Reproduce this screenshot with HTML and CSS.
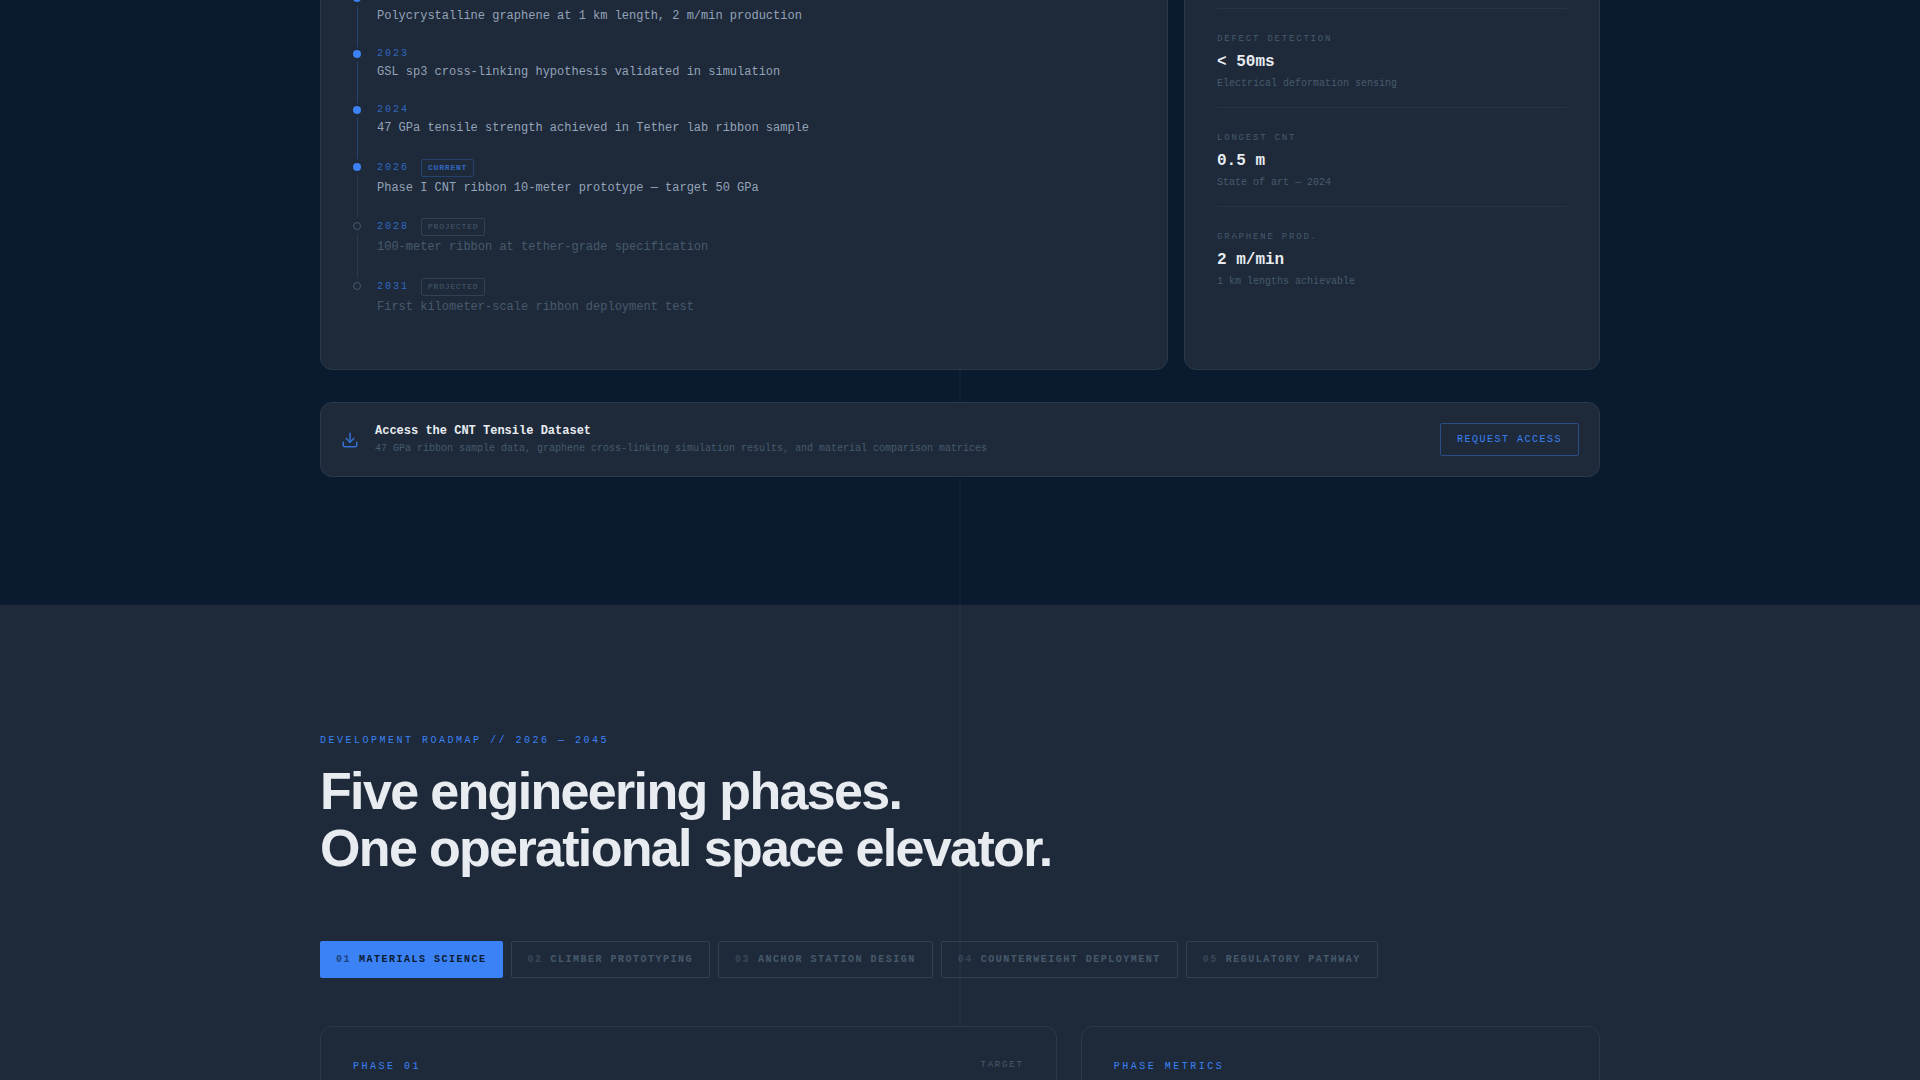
FILE: index.html
```
<!DOCTYPE html>
<html lang="en">
<head>
    <meta charset="UTF-8">
    <meta name="viewport" content="width=device-width, initial-scale=1.0">
    <title>Space Elevator Roadmap</title>
    <link rel="stylesheet" href="styles.css">
</head>
<body>
    <main class="page">
        <div class="tether-line"></div>

        <!-- Materials -->
        <section class="section materials">
            <div class="container">
                <div class="materials-grid">
                    <div class="card">
                        <ol class="timeline">
                            <li class="event">
                                <div class="marker"><span class="dot"></span><span class="line"></span></div>
                                <div class="event-body">
                                    <div class="event-head"></div>
                                    <p class="event-text">Polycrystalline graphene at 1 km length, 2 m/min production</p>
                                </div>
                            </li>
                            <li class="event">
                                <div class="marker"><span class="dot"></span><span class="line"></span></div>
                                <div class="event-body">
                                    <div class="event-head"><span class="year">2023</span></div>
                                    <p class="event-text">GSL sp3 cross-linking hypothesis validated in simulation</p>
                                </div>
                            </li>
                            <li class="event">
                                <div class="marker"><span class="dot"></span><span class="line"></span></div>
                                <div class="event-body">
                                    <div class="event-head"><span class="year">2024</span></div>
                                    <p class="event-text">47 GPa tensile strength achieved in Tether lab ribbon sample</p>
                                </div>
                            </li>
                            <li class="event current">
                                <div class="marker"><span class="dot"></span><span class="line"></span></div>
                                <div class="event-body">
                                    <div class="event-head"><span class="year">2026</span><span class="badge">CURRENT</span></div>
                                    <p class="event-text">Phase I CNT ribbon 10-meter prototype — target 50 GPa</p>
                                </div>
                            </li>
                            <li class="event projected">
                                <div class="marker"><span class="dot"></span><span class="line"></span></div>
                                <div class="event-body">
                                    <div class="event-head"><span class="year">2028</span><span class="badge">PROJECTED</span></div>
                                    <p class="event-text">100-meter ribbon at tether-grade specification</p>
                                </div>
                            </li>
                            <li class="event projected">
                                <div class="marker"><span class="dot"></span></div>
                                <div class="event-body">
                                    <div class="event-head"><span class="year">2031</span><span class="badge">PROJECTED</span></div>
                                    <p class="event-text">First kilometer-scale ribbon deployment test</p>
                                </div>
                            </li>
                        </ol>
                    </div>

                    <div class="card">
                        <div class="stats">
                            <div class="stat">
                                <div class="stat-label">DEFECT DETECTION</div>
                                <div class="stat-value">&lt; 50ms</div>
                                <div class="stat-note">Electrical deformation sensing</div>
                            </div>
                            <div class="stat">
                                <div class="stat-label">LONGEST CNT</div>
                                <div class="stat-value">0.5 m</div>
                                <div class="stat-note">State of art — 2024</div>
                            </div>
                            <div class="stat">
                                <div class="stat-label">GRAPHENE PROD.</div>
                                <div class="stat-value">2 m/min</div>
                                <div class="stat-note">1 km lengths achievable</div>
                            </div>
                        </div>
                    </div>
                </div>

                <div class="card dataset">
                    <svg class="dataset-icon" viewBox="0 0 24 24" fill="none" stroke="currentColor" stroke-width="2" stroke-linecap="round" stroke-linejoin="round" aria-hidden="true">
                        <path d="M21 15v4a2 2 0 0 1-2 2H5a2 2 0 0 1-2-2v-4"/>
                        <path d="M7 10l5 5 5-5"/>
                        <path d="M12 15V3"/>
                    </svg>
                    <div class="dataset-text">
                        <h3>Access the CNT Tensile Dataset</h3>
                        <p>47 GPa ribbon sample data, graphene cross-linking simulation results, and material comparison matrices</p>
                    </div>
                    <button class="request-btn" type="button">REQUEST ACCESS</button>
                </div>
            </div>
        </section>

        <!-- Roadmap -->
        <section class="section roadmap">
            <div class="container">
                <p class="eyebrow">DEVELOPMENT ROADMAP // 2026 — 2045</p>
                <h2>Five engineering phases.<br>One operational space elevator.</h2>

                <div class="tabs">
                    <button class="tab active" type="button"><span class="tab-number">01</span><span>MATERIALS SCIENCE</span></button>
                    <button class="tab" type="button"><span class="tab-number">02</span><span>CLIMBER PROTOTYPING</span></button>
                    <button class="tab" type="button"><span class="tab-number">03</span><span>ANCHOR STATION DESIGN</span></button>
                    <button class="tab" type="button"><span class="tab-number">04</span><span>COUNTERWEIGHT DEPLOYMENT</span></button>
                    <button class="tab" type="button"><span class="tab-number">05</span><span>REGULATORY PATHWAY</span></button>
                </div>

                <div class="phase-grid">
                    <div class="card phase-card">
                        <div class="phase-head">
                            <p class="eyebrow">PHASE 01</p>
                            <span class="stat-label">TARGET</span>
                        </div>
                    </div>
                    <div class="card phase-card">
                        <p class="eyebrow">PHASE METRICS</p>
                    </div>
                </div>
            </div>
        </section>
    </main>
</body>
</html>
```
FILE: styles.css
```
:root {
    --navy: #0a1a2f;
    --surface: #1e2a3a;
    --blue: #3b82f6;
    --white: #e8ecf1;
    --text: #94a3b8;
    --muted: #475a6c;
    --border: #2b394a;
    --mono: "Liberation Mono", monospace;
}

* {
    margin: 0;
    padding: 0;
    box-sizing: border-box;
}

body {
    background: var(--navy);
    color: var(--white);
    font-family: var(--mono);
}

.page {
    position: relative;
    display: flex;
    flex-direction: column;
    height: 100vh;
    overflow: hidden;
}

/* Vertical tether running behind the cards */
.tether-line {
    position: absolute;
    z-index: 1;
    top: 0;
    bottom: 0;
    left: 50%;
    width: 2px;
    margin-left: -1px;
    background: rgba(148, 163, 184, 0.05);
}

.container {
    width: 100%;
    max-width: 1280px;
    margin: 0 auto;
}

.card {
    position: relative;
    z-index: 2;
    padding: 32px;
    background: var(--surface);
    border: 1px solid var(--border);
    border-radius: 12px;
}

.eyebrow {
    font-size: 10px;
    line-height: 16px;
    letter-spacing: 0.25em;
    color: var(--blue);
}

/* Materials */
.materials {
    padding-bottom: 128px;
}

.materials-grid {
    display: grid;
    grid-template-columns: repeat(12, 1fr);
    gap: 16px;
    margin-top: -42px;
    margin-bottom: 32px;
}

.materials-grid .card:first-child {
    grid-column: span 8;
}

.materials-grid .card:last-child {
    grid-column: span 4;
}

.timeline {
    list-style: none;
}

.event {
    display: flex;
    gap: 16px;
}

.marker {
    display: flex;
    flex-direction: column;
    align-items: center;
    width: 8px;
    padding-top: 3px;
}

.dot {
    width: 8px;
    height: 8px;
    border-radius: 50%;
    background: var(--blue);
}

.line {
    flex: 1;
    width: 1px;
    margin-top: 4px;
    background: rgba(59, 130, 246, 0.3);
}

.event-body {
    padding-bottom: 22px;
}

.event-head {
    display: flex;
    align-items: center;
    gap: 12px;
    min-height: 14px;
    margin-bottom: 2px;
}

.year {
    font-size: 10px;
    line-height: 14px;
    letter-spacing: 0.2em;
    color: var(--blue);
    opacity: 0.7;
}

.badge {
    padding: 3px 6px;
    border: 1px solid rgba(59, 130, 246, 0.4);
    border-radius: 2px;
    font-size: 8px;
    line-height: 10px;
    letter-spacing: 0.1em;
    color: var(--blue);
}

.event-text {
    font-size: 12px;
    line-height: 18px;
    color: var(--text);
}

/* Rows with a badge are taller, so the dot sits lower */
.current .marker,
.projected .marker {
    padding-top: 4px;
}

.current .event-body,
.event:last-child .event-body {
    padding-bottom: 21px;
}

.current .badge {
    font-weight: 700;
    opacity: 0.7;
}

.current .line,
.projected .line {
    background: var(--border);
}

.projected .dot {
    background: transparent;
    border: 1px solid var(--muted);
}

.projected .badge {
    border-color: #324151;
    color: var(--muted);
}

.projected .event-text {
    color: var(--muted);
}

.stats {
    display: flex;
    flex-direction: column;
    padding-top: 17px;
}

.stat {
    padding: 24px 0 16px;
    border-top: 1px solid #273443;
}

.stat-label {
    font-size: 9px;
    line-height: 12px;
    letter-spacing: 0.2em;
    color: var(--muted);
}

.stat-value {
    margin: 6px 0 4px;
    font-size: 16px;
    line-height: 22px;
    font-weight: 700;
}

.stat-note {
    font-size: 10px;
    line-height: 14px;
    color: var(--muted);
}

.dataset {
    display: flex;
    align-items: center;
    gap: 16px;
    padding: 20px;
}

.dataset-icon {
    width: 18px;
    height: 18px;
    color: var(--blue);
    opacity: 0.8;
}

.dataset-text {
    flex: 1;
}

.dataset-text h3 {
    margin-bottom: 2px;
    font-size: 12px;
    line-height: 16px;
}

.dataset-text p {
    font-size: 10px;
    line-height: 15px;
    color: var(--muted);
}

.request-btn {
    padding: 10px 16px;
    background: transparent;
    border: 1px solid rgba(59, 130, 246, 0.4);
    border-radius: 2px;
    font-family: var(--mono);
    font-size: 10px;
    line-height: 11px;
    letter-spacing: 0.15em;
    color: var(--blue);
    cursor: pointer;
}

/* Roadmap */
.roadmap {
    flex: 1 0 auto;
    padding: 128px 0;
    background: var(--surface);
}

.roadmap h2 {
    margin: 14px 0 64px;
    font-family: "Liberation Sans", Arial, sans-serif;
    font-size: 52px;
    line-height: 57px;
    letter-spacing: -0.032em;
}

.tabs {
    display: flex;
    gap: 8px;
    margin-bottom: 48px;
}

.tab {
    display: flex;
    align-items: center;
    gap: 8px;
    padding: 12px 16px;
    background: transparent;
    border: 1px solid #324151;
    border-radius: 2px;
    font-family: var(--mono);
    font-size: 10px;
    line-height: 11px;
    font-weight: 700;
    letter-spacing: 0.15em;
    color: var(--muted);
    cursor: pointer;
}

.tab.active {
    background: var(--blue);
    border: none;
    color: var(--navy);
}

.tab-number {
    opacity: 0.6;
}

.phase-grid {
    display: grid;
    grid-template-columns: repeat(12, 1fr);
    gap: 24px;
}

.phase-card:first-child {
    grid-column: span 7;
}

.phase-card:last-child {
    grid-column: span 5;
}

.phase-head {
    display: flex;
    justify-content: space-between;
    align-items: flex-start;
}
```
